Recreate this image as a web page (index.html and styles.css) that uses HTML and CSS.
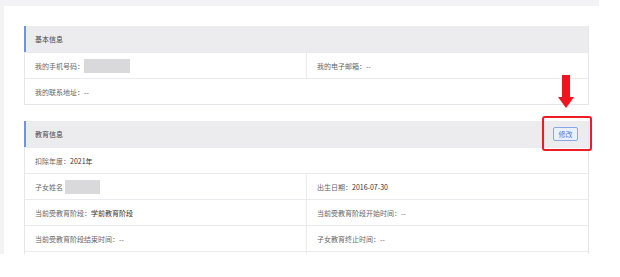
FILE: index.html
```html
<!DOCTYPE html>
<html lang="zh-CN">
<head>
    <meta charset="UTF-8">
    <meta name="viewport" content="width=device-width, initial-scale=1.0">
    <title>个人信息</title>
    <link rel="stylesheet" href="styles.css">
</head>
<body>
    <div class="frame">
      <div class="panel">
        <div class="sec">
          <div class="sec-head">
            <span class="sec-title">基本信息</span>
          </div>
          <div class="row two">
            <div class="cell">我的手机号码：<span class="mask mask-phone"></span></div>
            <div class="cell">我的电子邮箱：--</div>
          </div>
          <div class="row">
            <div class="cell">我的联系地址：--</div>
          </div>
        </div>

        <div class="sec sec-edu">
          <div class="sec-head">
            <span class="sec-title">教育信息</span>
            <button class="btn-edit">修改</button>
          </div>
          <div class="row">
            <div class="cell">扣除年度：<span class="val">2021年</span></div>
          </div>
          <div class="row two">
            <div class="cell">子女姓名 <span class="mask mask-name"></span></div>
            <div class="cell">出生日期：<span class="val">2016-07-30</span></div>
          </div>
          <div class="row two">
            <div class="cell">当前受教育阶段：<span class="val">学前教育阶段</span></div>
            <div class="cell">当前受教育阶段开始时间：--</div>
          </div>
          <div class="row two">
            <div class="cell">当前受教育阶段结束时间：--</div>
            <div class="cell">子女教育终止时间：--</div>
          </div>
          <div class="row two">
            <div class="cell"></div>
            <div class="cell"></div>
          </div>

          <!-- annotation over the edit button -->
          <div class="mark-box"></div>
          <svg class="mark-arrow" width="18" height="34" viewBox="0 0 18 34">
            <rect x="5" y="0" width="8" height="23" fill="#f0141e"/>
            <polygon points="1,22 17,22 9,33" fill="#f0141e"/>
          </svg>
        </div>
      </div>
    </div>
</body>
</html>
```

FILE: styles.css
```css
body {
  margin: 0;
  background: #fff;
  font-family: "Noto Sans CJK SC", "Noto Sans", sans-serif;
  font-size: 7px;
  color: #666;
}

.frame {
  width: 599px;
  height: 254px;
  background: #f3f3f6;
  padding: 6px 0 0 4px;
  box-sizing: border-box;
  overflow: hidden;
}

.panel {
  background: #fff;
  height: 100%;
  padding: 20px 10px 0 20px;
  box-sizing: border-box;
}

.sec {
  border: 1px solid #e6e6ea;
  border-top: none;
  position: relative;
}

.sec-edu {
  margin-top: 16px;
}

.sec-head {
  height: 26px;
  background: #ececef;
  border-left: 2px solid #6f92e6;
  margin-left: -1px;
  padding: 0 10px 0 9px;
  display: flex;
  align-items: center;
  justify-content: space-between;
  color: #444;
}

.btn-edit {
  font-family: inherit;
  font-size: 7px;
  color: #4d7ad6;
  background: #eaf1fd;
  border: 1px solid #86a6e6;
  border-radius: 2px;
  width: 25px;
  height: 14px;
  padding: 0;
  line-height: 12px;
}

.row {
  height: 26px;
  border-top: 1px solid #ebebef;
  box-sizing: border-box;
  display: grid;
  grid-template-columns: 1fr;
}

.row.two {
  grid-template-columns: 281px 1fr;
}

.cell {
  display: flex;
  align-items: center;
  padding-left: 10px;
}

.row.two .cell + .cell {
  border-left: 1px solid #ebebef;
}

.val {
  color: #333;
}

.mask {
  display: inline-block;
  background: #d9d9dc;
  height: 14px;
}

.mask-phone {
  width: 46px;
}

.mask-name {
  width: 35px;
  margin-left: 2px;
}

.mark-box {
  position: absolute;
  left: 517px;
  top: -5px;
  width: 46px;
  height: 31px;
  border: 2px solid #ee1c25;
  border-radius: 3px;
}

.mark-arrow {
  position: absolute;
  left: 532px;
  top: -46px;
}
```
